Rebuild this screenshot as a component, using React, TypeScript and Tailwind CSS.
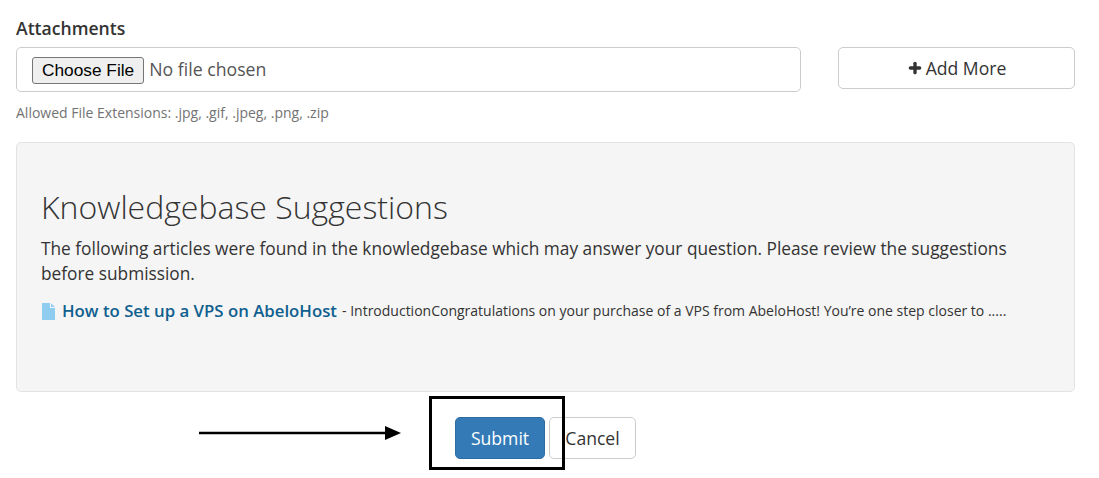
import { Plus } from "lucide-react";

const App = () => {
  return (
    <div className="relative h-[478px] w-[1099px] overflow-hidden bg-white px-4 pt-[17px] font-['Open_Sans',sans-serif] text-[#333]">
      {/* Attachments */}
      <label className="block h-[22px] text-[17.6px] leading-[22px] font-semibold">Attachments</label>
      <div className="mt-2 flex items-start justify-between pr-2">
        <div className="flex h-[45px] w-[785px] items-center rounded-[5px] border border-[#ccc] px-[15px]">
          <input
            type="file"
            className="w-full text-[17.7px] text-[#555] file:mr-[5px] file:h-[27px] file:rounded-[3px] file:border file:border-[#767676] file:bg-[#efefef] file:px-[9px] file:font-['Liberation_Sans',sans-serif] file:text-[17.3px] file:text-black"
          />
        </div>
        <button className="flex h-[42px] w-[237px] items-center justify-center rounded-[5px] border border-[#ccc] text-[17.6px] text-[#333]">
          <Plus size={16} strokeWidth={5} className="mr-[3px]" />
          Add More
        </button>
      </div>
      <p className="mt-[11px] text-sm leading-5 text-[#737373]">Allowed File Extensions: .jpg, .gif, .jpeg, .png, .zip</p>

      {/* Suggestions */}
      <div className="mt-[19px] mr-2 h-[250px] rounded-[5px] border border-[#e3e3e3] bg-[#f5f5f5] px-6 pt-[46px]">
        <h3 className="text-[32px] leading-[36px] font-light">Knowledgebase Suggestions</h3>
        <p className="mt-[11px] text-[17.3px] leading-[25px]">
          The following articles were found in the knowledgebase which may answer your question. Please review the suggestions before submission.
        </p>
        <div className="mt-[13px] flex items-center text-sm leading-6">
          <svg viewBox="0 0 13 17" className="mr-[7px] ml-px h-[17px] w-[13px]" fill="#8fcdf0">
            <path d="M0 0h8v5h5v12H0z" />
            <path d="M9 0.3 13 4H9z" />
          </svg>
          <a className="mr-[5px] text-[16.8px] font-semibold text-[#0f5f8f]">How to Set up a VPS on AbeloHost</a>
          <span>- IntroductionCongratulations on your purchase of a VPS from AbeloHost! You&rsquo;re one step closer to .....</span>
        </div>
      </div>

      {/* Actions */}
      <div className="mt-[25px] ml-[439px] flex gap-1">
        <button className="h-[42px] w-[90px] rounded-[5px] border border-[#2e6da4] bg-[#337ab7] text-[17.6px] text-white">Submit</button>
        <button className="h-[42px] w-[87px] rounded-[5px] border border-[#ccc] text-[17.6px] text-[#333]">Cancel</button>
      </div>

      {/* Annotations drawn over the page */}
      <svg className="absolute top-[424px] left-[199px]" width="203" height="18" viewBox="0 0 203 18">
        <path d="M0 9h188" stroke="#000" strokeWidth="2.5" />
        <path d="M186 2l16 7-16 7z" fill="#000" />
      </svg>
      <div className="absolute top-[396px] left-[429px] h-[74px] w-[136px] border-[3px] border-black" />
    </div>
  );
};

export default App;
